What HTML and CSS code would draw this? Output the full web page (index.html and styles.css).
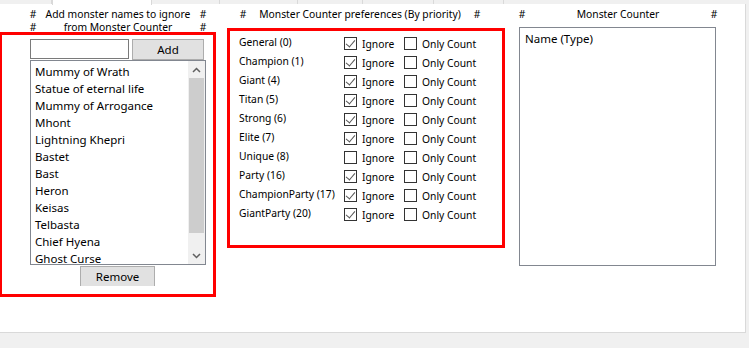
FILE: index.html
```html
<!DOCTYPE html>
<html>
<head>
<meta charset="utf-8">
<link rel="stylesheet" href="styles.css">
</head>
<body>
<div class="tabs">
  <div class="tab t1"></div>
  <div class="tab active t2"></div>
  <div class="tab t3"></div>
  <div class="tab t4"></div>
  <div class="tab t5"></div>
  <div class="tab t6"></div>
  <div class="tab t7"></div>
  <div class="tab rest"></div>
</div>
<div class="panel">
  <section class="col col-ignore">
    <div class="head head-ignore"><span>#</span><span class="ht">Add monster names to ignore</span><span>#</span></div>
    <div class="head head-ignore"><span>#</span><span class="ht">from Monster Counter</span><span>#</span></div>
    <div class="redbox box-ignore">
      <div class="addrow">
        <input class="txt" type="text">
        <button class="btn add">Add</button>
      </div>
      <div class="listbox names">
        <ul class="items">
          <li>Mummy of Wrath</li>
          <li>Statue of eternal life</li>
          <li>Mummy of Arrogance</li>
          <li>Mhont</li>
          <li>Lightning Khepri</li>
          <li>Bastet</li>
          <li>Bast</li>
          <li>Heron</li>
          <li>Keisas</li>
          <li>Telbasta</li>
          <li>Chief Hyena</li>
          <li>Ghost Curse</li>
        </ul>
        <div class="scrollbar">
          <div class="sb-btn"><svg width="9" height="6" viewBox="0 0 9 6"><polyline points="1,5 4.5,1.5 8,5" fill="none" stroke="#606060" stroke-width="1.5"/></svg></div>
          <div class="sb-thumb"></div>
          <div class="sb-track"></div>
          <div class="sb-btn"><svg width="9" height="6" viewBox="0 0 9 6"><polyline points="1,1 4.5,4.5 8,1" fill="none" stroke="#606060" stroke-width="1.5"/></svg></div>
        </div>
      </div>
      <button class="btn remove">Remove</button>
    </div>
  </section>

  <section class="col col-prefs">
    <div class="head head-prefs"><span>#</span><span class="ht">Monster Counter preferences (By priority)</span><span>#</span></div>
    <div class="redbox box-prefs">
      <div class="prow"><span class="plabel">General (0)</span><label class="chk"><span class="cb on"></span>Ignore</label><label class="chk"><span class="cb"></span>Only Count</label></div>
      <div class="prow"><span class="plabel">Champion (1)</span><label class="chk"><span class="cb on"></span>Ignore</label><label class="chk"><span class="cb"></span>Only Count</label></div>
      <div class="prow"><span class="plabel">Giant (4)</span><label class="chk"><span class="cb on"></span>Ignore</label><label class="chk"><span class="cb"></span>Only Count</label></div>
      <div class="prow"><span class="plabel">Titan (5)</span><label class="chk"><span class="cb on"></span>Ignore</label><label class="chk"><span class="cb"></span>Only Count</label></div>
      <div class="prow"><span class="plabel">Strong (6)</span><label class="chk"><span class="cb on"></span>Ignore</label><label class="chk"><span class="cb"></span>Only Count</label></div>
      <div class="prow"><span class="plabel">Elite (7)</span><label class="chk"><span class="cb on"></span>Ignore</label><label class="chk"><span class="cb"></span>Only Count</label></div>
      <div class="prow"><span class="plabel">Unique (8)</span><label class="chk"><span class="cb"></span>Ignore</label><label class="chk"><span class="cb"></span>Only Count</label></div>
      <div class="prow"><span class="plabel">Party (16)</span><label class="chk"><span class="cb on"></span>Ignore</label><label class="chk"><span class="cb"></span>Only Count</label></div>
      <div class="prow"><span class="plabel">ChampionParty (17)</span><label class="chk"><span class="cb on"></span>Ignore</label><label class="chk"><span class="cb"></span>Only Count</label></div>
      <div class="prow"><span class="plabel">GiantParty (20)</span><label class="chk"><span class="cb on"></span>Ignore</label><label class="chk"><span class="cb"></span>Only Count</label></div>
    </div>
  </section>

  <section class="col col-counter">
    <div class="head head-counter"><span>#</span><span class="ht">Monster Counter</span><span>#</span></div>
    <div class="listbox counter">
      <div class="counter-item">Name (Type)</div>
    </div>
  </section>
</div>
</body>
</html>
```

FILE: styles.css
```css
* { box-sizing: border-box; }
html, body {
  margin: 0;
  padding: 0;
  background: #f0f0f0;
  width: 749px;
  height: 348px;
  overflow: hidden;
  font-family: "Segoe UI", "Noto Sans", "DejaVu Sans", sans-serif;
  color: #000;
}

.tabs {
  display: flex;
  height: 4px;
  border-bottom: 1px solid #d9d9d9;
}
.tab {
  height: 4px;
  background: #f0f0f0;
  border-right: 1px solid #d9d9d9;
}
.tab.active {
  background: #fff;
  height: 5px;
  border-left: 1px solid #d9d9d9;
}
.t1 { width: 52px; }
.t2 { width: 100px; }
.t3 { width: 68px; }
.t4 { width: 78px; }
.t5 { width: 65px; }
.t6 { width: 71px; }
.t7 { width: 70px; }
.tab.rest { flex: 1; border-right: none; }

.panel {
  width: 746px;
  height: 329px;
  background: #fff;
  border-right: 1px solid #d9d9d9;
  border-bottom: 1px solid #d9d9d9;
  display: flex;
  align-items: flex-start;
  padding-top: 4px;
}

.col { display: flex; flex-direction: column; }

.head {
  display: grid;
  grid-template-columns: 12px 1fr 12px;
  font-size: 10.3px;
  line-height: 13px;
  height: 13px;
  text-align: center;
  white-space: nowrap;
}

.redbox {
  border: 3px solid #ff0000;
}

/* left column */
.col-ignore { margin-left: -1px; width: 217px; }
.head-ignore { margin-left: 28px; width: 182px; }
.box-ignore {
  width: 217px;
  height: 265px;
  margin-top: -2px;
  padding: 4px 0 0 28px;
}
.addrow { display: flex; height: 21px; }
.txt {
  width: 99px;
  height: 20px;
  border: 1px solid #7a7a7a;
  margin: 0;
  padding: 0;
  background: #fff;
}
.btn {
  font-family: inherit;
  font-size: 11.5px;
  background: #e1e1e1;
  border: 1px solid #adadad;
  color: #000;
  padding: 0;
  margin: 0;
}
.add {
  width: 72px;
  height: 21px;
  margin-left: 3px;
  line-height: 18px;
}
.listbox {
  border: 1px solid #828790;
  background: #fff;
}
.names {
  width: 176px;
  height: 205px;
  display: flex;
}
.items {
  list-style: none;
  margin: 0;
  padding: 2px 0 0 4px;
  flex: 1;
  font-size: 11.5px;
}
.items li {
  height: 17px;
  line-height: 17px;
  white-space: nowrap;
}
.scrollbar {
  width: 17px;
  background: #f0f0f0;
  display: flex;
  flex-direction: column;
}
.sb-btn {
  height: 17px;
  display: flex;
  align-items: center;
  justify-content: center;
}
.sb-thumb {
  height: 155px;
  margin: 0 1px;
  background: #cdcdcd;
}
.sb-track { flex: 1; }
.remove {
  display: block;
  width: 75px;
  height: 20px;
  margin: 1px 0 0 50px;
  border-bottom: none;
  line-height: 19px;
}

/* middle column */
.col-prefs { margin-left: 11px; width: 278px; }
.head-prefs { margin-left: 10px; width: 246px; }
.box-prefs {
  width: 278px;
  height: 220px;
  margin-top: 7px;
  padding: 3px 0 0 9px;
}
.prow {
  display: flex;
  align-items: center;
  height: 19px;
  font-size: 10.3px;
  white-space: nowrap;
}
.plabel {
  width: 105px;
  position: relative;
  top: -1.5px;
}
.chk {
  display: flex;
  align-items: center;
  width: 60px;
}
.cb {
  width: 13px;
  height: 13px;
  border: 1px solid #333;
  background: #fff;
  margin-right: 5px;
  flex: none;
  position: relative;
}
.cb.on::after {
  content: "";
  position: absolute;
  left: 3px;
  top: 0px;
  width: 4px;
  height: 8px;
  border-right: 1.3px solid #555;
  border-bottom: 1.3px solid #555;
  transform: rotate(40deg);
}

/* right column */
.col-counter { margin-left: 14px; width: 197px; }
.head-counter { margin-left: -3px; width: 204px; }
.counter {
  width: 197px;
  height: 239px;
  margin-top: 6px;
  padding: 3px 5px;
  font-size: 11.5px;
}
.counter-item { line-height: 16px; }
```
